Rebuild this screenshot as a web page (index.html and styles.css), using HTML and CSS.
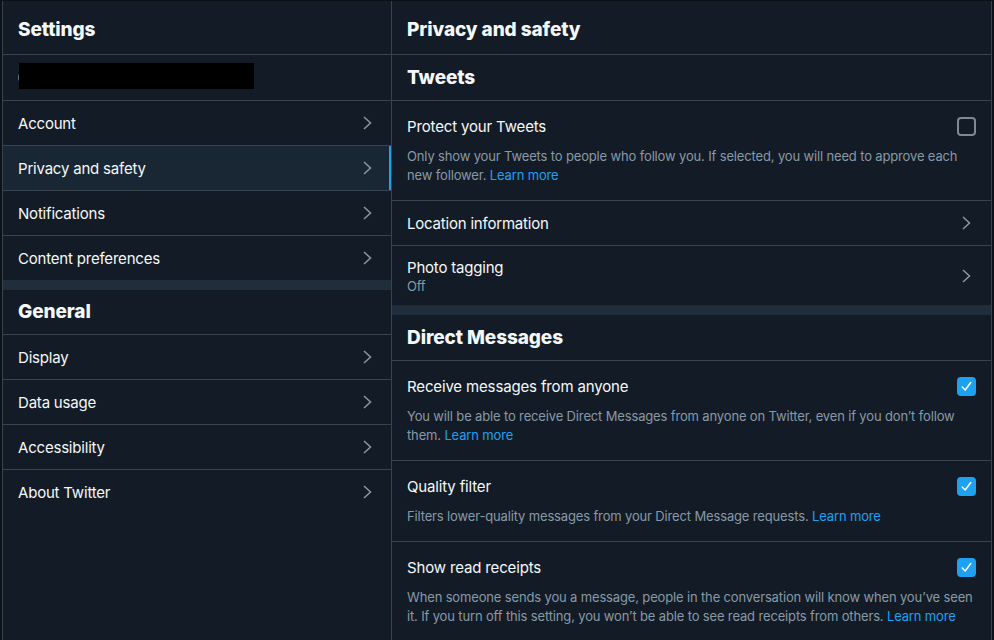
FILE: index.html
```html
<!DOCTYPE html>
<html lang="en">
<head>
<meta charset="utf-8">
<title>Settings - Privacy and safety</title>
<link rel="stylesheet" href="styles.css">
</head>
<body>
<div class="shell">
  <aside class="sidebar">
    <header class="col-header"><h1>Settings</h1></header>
    <div class="account-row"><span class="at-mark"></span><span class="redacted"></span></div>
    <a class="nav-row">Account<svg class="chev" viewBox="0 0 9 14"><path d="M1 1 L7.5 7 L1 13"/></svg></a>
    <a class="nav-row active">Privacy and safety<svg class="chev" viewBox="0 0 9 14"><path d="M1 1 L7.5 7 L1 13"/></svg></a>
    <a class="nav-row">Notifications<svg class="chev" viewBox="0 0 9 14"><path d="M1 1 L7.5 7 L1 13"/></svg></a>
    <a class="nav-row last">Content preferences<svg class="chev" viewBox="0 0 9 14"><path d="M1 1 L7.5 7 L1 13"/></svg></a>
    <div class="band"></div>
    <div class="section-header side"><h2>General</h2></div>
    <a class="nav-row">Display<svg class="chev" viewBox="0 0 9 14"><path d="M1 1 L7.5 7 L1 13"/></svg></a>
    <a class="nav-row">Data usage<svg class="chev" viewBox="0 0 9 14"><path d="M1 1 L7.5 7 L1 13"/></svg></a>
    <a class="nav-row">Accessibility<svg class="chev" viewBox="0 0 9 14"><path d="M1 1 L7.5 7 L1 13"/></svg></a>
    <a class="nav-row last">About Twitter<svg class="chev" viewBox="0 0 9 14"><path d="M1 1 L7.5 7 L1 13"/></svg></a>
  </aside>

  <main class="content">
    <header class="col-header"><h1>Privacy and safety</h1></header>
    <div class="section-header"><h2>Tweets</h2></div>

    <div class="check-row">
      <div class="check-top">
        <span class="title">Protect your Tweets</span>
        <span class="box"></span>
      </div>
      <p class="desc">Only show your Tweets to people who follow you. If selected, you will need to approve each<br>new follower. <a class="link">Learn more</a></p>
    </div>

    <a class="nav-row">Location information<svg class="chev" viewBox="0 0 9 14"><path d="M1 1 L7.5 7 L1 13"/></svg></a>
    <a class="nav-row two-line last">
      <span class="stack"><span>Photo tagging</span><span class="sub">Off</span></span>
      <svg class="chev" viewBox="0 0 9 14"><path d="M1 1 L7.5 7 L1 13"/></svg>
    </a>
    <div class="band"></div>

    <div class="section-header"><h2>Direct Messages</h2></div>

    <div class="check-row">
      <div class="check-top">
        <span class="title">Receive messages from anyone</span>
        <span class="box checked"><svg viewBox="0 0 20 20"><path d="M5.5 10.5 L8.6 13.6 L14.5 5.8"/></svg></span>
      </div>
      <p class="desc">You will be able to receive Direct Messages from anyone on Twitter, even if you don’t follow<br>them. <a class="link">Learn more</a></p>
    </div>

    <div class="check-row">
      <div class="check-top">
        <span class="title">Quality filter</span>
        <span class="box checked"><svg viewBox="0 0 20 20"><path d="M5.5 10.5 L8.6 13.6 L14.5 5.8"/></svg></span>
      </div>
      <p class="desc">Filters lower-quality messages from your Direct Message requests. <a class="link">Learn more</a></p>
    </div>

    <div class="check-row">
      <div class="check-top">
        <span class="title">Show read receipts</span>
        <span class="box checked"><svg viewBox="0 0 20 20"><path d="M5.5 10.5 L8.6 13.6 L14.5 5.8"/></svg></span>
      </div>
      <p class="desc">When someone sends you a message, people in the conversation will know when you’ve seen<br>it. If you turn off this setting, you won’t be able to see read receipts from others. <a class="link">Learn more</a></p>
    </div>
  </main>
</div>
</body>
</html>
```

FILE: styles.css
```css
* { box-sizing: border-box; }

html, body {
  margin: 0;
  height: 100%;
}

body {
  background: #0c1218;
  color: #f5f8fa;
  font-family: "Inter", "Liberation Sans", sans-serif;
  font-size: 15px;
  overflow: hidden;
}

.shell {
  display: flex;
  height: 100%;
  padding: 1px 0 0 2px;
}

.sidebar {
  width: 390px;
  flex: none;
  background: #131c26;
  border-left: 1px solid #38444d;
  border-right: 1px solid #38444d;
}

.content {
  width: 600px;
  flex: none;
  background: #131c26;
  border-right: 1px solid #38444d;
}

.col-header {
  height: 54px;
  border-bottom: 1px solid #38444d;
  display: flex;
  align-items: center;
  padding: 4px 15px 0 15px;
}

.col-header h1 {
  margin: 0;
  font-size: 19px;
  font-weight: 800;
  letter-spacing: -0.1px;
}

.section-header {
  height: 46px;
  border-bottom: 1px solid #38444d;
  display: flex;
  align-items: center;
  padding: 0 15px;
}

.section-header.side {
  height: 45px;
  padding-bottom: 1px;
}

.section-header h2 {
  margin: 0;
  font-size: 19px;
  font-weight: 800;
  letter-spacing: -0.1px;
}

.account-row {
  height: 46px;
  border-bottom: 1px solid #38444d;
  display: flex;
  align-items: center;
  padding: 0 15px;
}

.at-mark {
  display: block;
  width: 2px;
  height: 7px;
  border-radius: 2px 0 0 2px;
  background: #5f6f7c;
  margin-right: -1px;
}

.redacted {
  display: block;
  width: 235px;
  height: 26px;
  background: #000;
  margin-top: -3px;
}

.nav-row {
  display: flex;
  align-items: center;
  justify-content: space-between;
  height: 45px;
  padding: 0 19px 0 15px;
  border-bottom: 1px solid #38444d;
  color: #f5f8fa;
  text-decoration: none;
  letter-spacing: -0.2px;
  position: relative;
}

.nav-row.last { border-bottom: none; height: 44px; }

.nav-row.active {
  background: #192734;
}

.nav-row.active::after {
  content: "";
  position: absolute;
  right: 0;
  top: 0;
  bottom: 0;
  width: 2px;
  background: #1da1f2;
}

.chev {
  width: 9px;
  height: 14px;
  fill: none;
  stroke: #8899a6;
  stroke-width: 1.5;
}

.content .nav-row { padding-right: 20px; }

.nav-row.two-line.last { height: 59px; }

.stack {
  display: flex;
  flex-direction: column;
  line-height: 20px;
}

.sub {
  font-size: 13px;
  line-height: 16px;
  color: #8899a6;
}

.band {
  height: 10px;
  background: #202d3a;
}

.check-row {
  padding: 15px 15px 15px 15px;
  border-bottom: 1px solid #38444d;
}

.check-top {
  display: flex;
  align-items: center;
  justify-content: space-between;
  height: 20px;
  letter-spacing: -0.15px;
}

.box {
  width: 19px;
  height: 19px;
  border: 2px solid #7b8a96;
  border-radius: 4px;
  display: flex;
  align-items: center;
  justify-content: center;
}

.box.checked {
  background: #1da1f2;
  border-color: #1da1f2;
}

.box svg {
  width: 19px;
  height: 19px;
  flex: none;
  fill: none;
  stroke: #ffffff;
  stroke-width: 1.6;
  stroke-linecap: round;
  stroke-linejoin: round;
}

.desc {
  margin: 11px -15px 0 0;
  font-size: 13px;
  line-height: 19px;
  color: #8899a6;
  letter-spacing: -0.15px;
  white-space: nowrap;
}

.link {
  color: #1da1f2;
  text-decoration: none;
}
```
